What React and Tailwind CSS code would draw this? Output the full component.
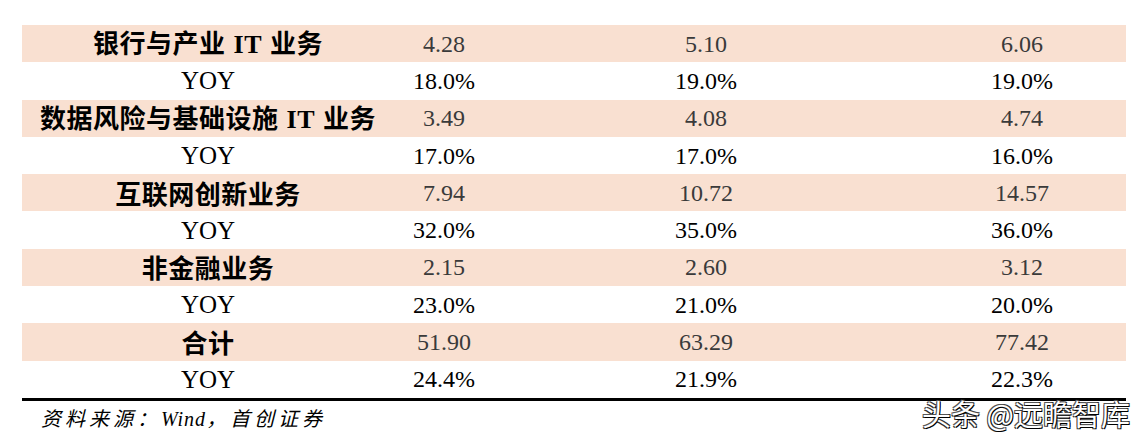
import React from 'react';

const rows = [
    { label: ['银行与产业', 'IT', '业务'], values: ['4.28', '5.10', '6.06'] },
    { yoy: true, values: ['18.0%', '19.0%', '19.0%'] },
    { label: ['数据风险与基础设施', 'IT', '业务'], values: ['3.49', '4.08', '4.74'] },
    { yoy: true, values: ['17.0%', '17.0%', '16.0%'] },
    { label: ['互联网创新业务'], values: ['7.94', '10.72', '14.57'] },
    { yoy: true, values: ['32.0%', '35.0%', '36.0%'] },
    { label: ['非金融业务'], values: ['2.15', '2.60', '3.12'] },
    { yoy: true, values: ['23.0%', '21.0%', '20.0%'] },
    { label: ['合计'], values: ['51.90', '63.29', '77.42'] },
    { yoy: true, values: ['24.4%', '21.9%', '22.3%'] },
];

const serif = "font-['Liberation_Serif','Times_New_Roman',serif]";
const cjk = "font-['Noto_Sans_CJK_SC','Noto_Sans',sans-serif]";

const Label = ({ parts }) => (
    <span className={`${cjk} text-[26px] font-bold leading-none tracking-[0.5px] text-black`}>
        {parts[0]}
        {parts[1] && (
            <>
                <span className={`${serif} mx-[8px] text-[26px] font-bold`}>{parts[1]}</span>
                {parts[2]}
            </>
        )}
    </span>
);

export default function App() {
    return (
        <div className="relative h-[443px] w-[1147px] overflow-hidden bg-white">
            <div className="ml-[22px] w-[1104px] pt-[25px]">
                {rows.map((row, i) => (
                    <div
                        key={i}
                        className={`grid h-[37.3px] grid-cols-[372px_100px_424px_208px] items-center ${
                            row.yoy ? 'bg-white' : 'bg-[#f9e0d1]'
                        }`}
                    >
                        <div className="flex justify-center">
                            {row.yoy ? (
                                <span className={`${serif} text-[25px] leading-none text-black`}>YOY</span>
                            ) : (
                                <Label parts={row.label} />
                            )}
                        </div>
                        {row.values.map((v, j) => (
                            <div
                                key={j}
                                className={`${serif} text-center text-[24px] leading-none ${
                                    row.yoy ? 'text-black' : 'text-[#3a3a3a]'
                                }`}
                            >
                                {v}
                            </div>
                        ))}
                    </div>
                ))}
                <div className="h-[3px] bg-black" />
            </div>
            <p
                className={`ml-[41px] mt-[8px] text-[20px] italic leading-none tracking-[4px] text-black font-['Liberation_Serif','Noto_Sans_CJK_SC',serif]`}
            >
                资料来源：<span className="tracking-[1px]">Wind</span>，首创证券
            </p>
            <div
                className={`absolute left-[922px] top-[399px] ${cjk} text-[29px] font-normal leading-none text-white [text-shadow:1px_1px_0_#000,-1px_-1px_0_#555,1px_-1px_0_#333,-1px_1px_0_#333]`}
            >
                头条 @远瞻智库
            </div>
        </div>
    );
}
